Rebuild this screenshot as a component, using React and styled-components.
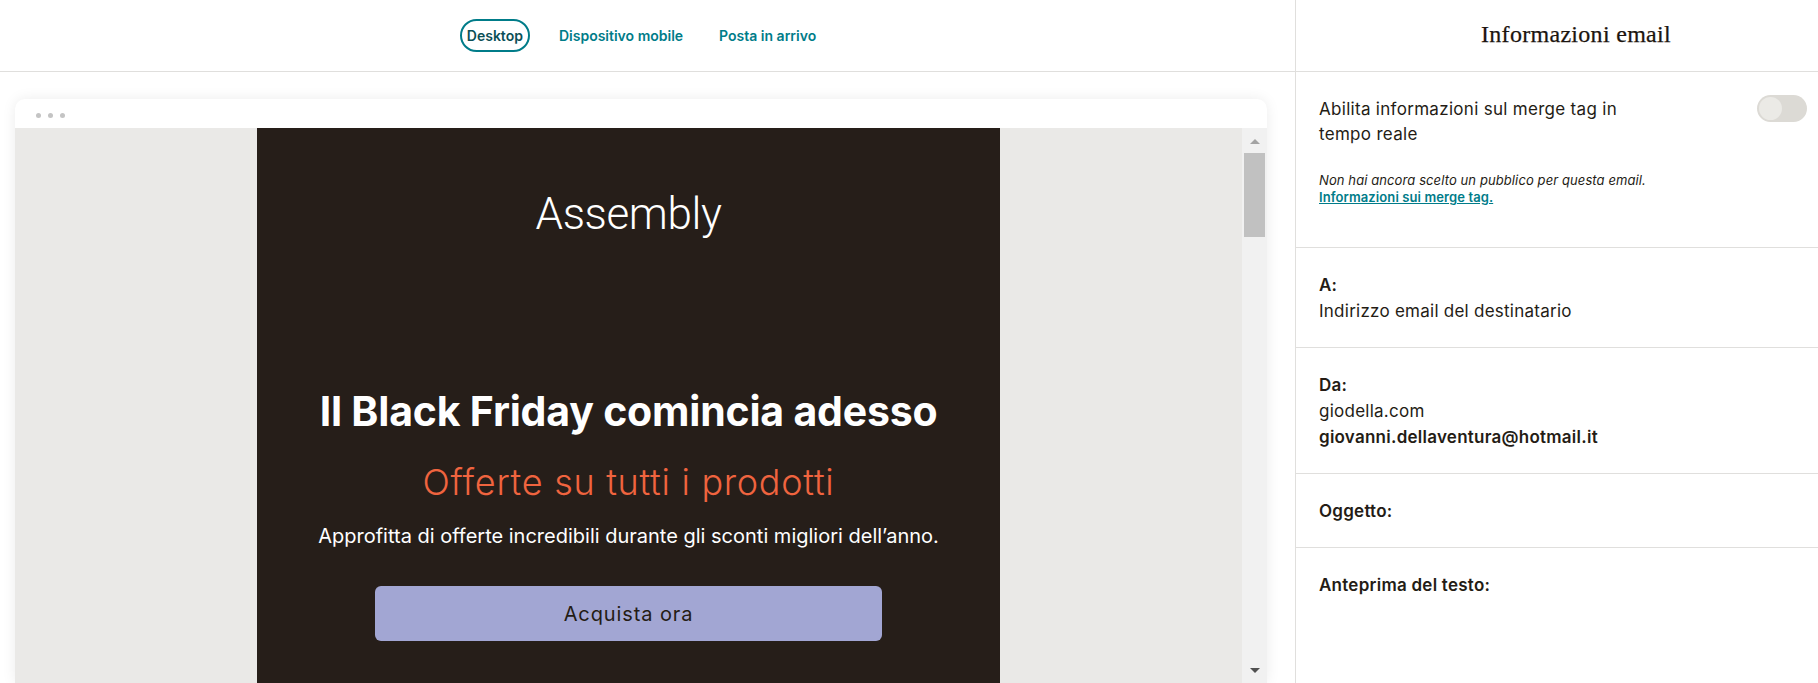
import React from 'react'
import styled, { createGlobalStyle } from 'styled-components'

const GlobalStyle = createGlobalStyle`
   html, body {
      margin: 0;
      padding: 0;
      background: #ffffff;
   }
   body {
      font-family: Inter, "Liberation Sans", sans-serif;
      color: #241c15;
   }
   * {
      box-sizing: border-box;
   }
`

const Page = styled.div`
   display: flex;
   height: 100vh;
   overflow: hidden;
`

const Main = styled.div`
   flex: 1;
   display: flex;
   flex-direction: column;
   min-width: 0;
`

const TopBar = styled.div`
   height: 72px;
   flex: 0 0 72px;
   border-bottom: 1px solid #e0dfdd;
   display: flex;
   align-items: center;
   justify-content: center;
   gap: 22px;
   padding-right: 12px;
   padding-bottom: 1px;
`

const Tab = styled.button`
   height: 33px;
   padding: 0 5px;
   border: 2px solid ${props => props.$active ? '#007c89' : 'transparent'};
   border-radius: 17px;
   background: none;
   font-family: Inter, "Liberation Sans", sans-serif;
   font-size: 14px;
   font-weight: 600;
   color: ${props => props.$active ? '#0b4f56' : '#007c89'};
   cursor: pointer;
`

const Canvas = styled.div`
   flex: 1;
   display: flex;
   padding: 27px 28px 0 15px;
   min-height: 0;
`

const Card = styled.div`
   flex: 1;
   display: flex;
   flex-direction: column;
   background: #ffffff;
   border-radius: 10px 10px 0 0;
   box-shadow: 0 0 14px rgba(0, 0, 0, 0.08);
   overflow: hidden;
`

const CardHeader = styled.div`
   height: 29px;
   flex: 0 0 29px;
   display: flex;
   align-items: flex-end;
   gap: 7px;
   padding: 0 0 10px 21px;
`

const Dot = styled.span`
   width: 5px;
   height: 5px;
   border-radius: 50%;
   background: #c4c4c4;
`

const CardBody = styled.div`
   flex: 1;
   display: flex;
   background: #eae9e7;
   min-height: 0;
`

const Viewport = styled.div`
   flex: 1;
   display: flex;
   justify-content: center;
   overflow: hidden;
`

const Email = styled.div`
   width: 743px;
   background: #261e19;
   display: flex;
   flex-direction: column;
   align-items: center;
   text-align: center;
   padding-top: 64px;
`

const Logo = styled.div`
   font-family: Roboto, "Liberation Sans", sans-serif;
   font-weight: 300;
   font-size: 44px;
   line-height: 44px;
   color: #ffffff;
   letter-spacing: -0.4px;
`

const Headline = styled.h1`
   margin: 151px 0 0;
   font-family: Inter, "Liberation Sans", sans-serif;
   font-weight: 700;
   font-size: 41px;
   line-height: 48px;
   color: #ffffff;
   letter-spacing: -0.2px;
`

const Subline = styled.h2`
   margin: 26px 0 0;
   font-family: Inter, "Liberation Sans", sans-serif;
   font-weight: 300;
   font-size: 36px;
   line-height: 42px;
   letter-spacing: 0.7px;
   color: #f0643f;
`

const Body = styled.p`
   margin: 20px 0 0;
   font-size: 20px;
   line-height: 26px;
   color: #ffffff;
`

const Cta = styled.a`
   margin-top: 37px;
   width: 507px;
   height: 55px;
   display: flex;
   align-items: center;
   justify-content: center;
   background: #a2a6d3;
   border-radius: 6px;
   font-size: 20px;
   letter-spacing: 0.9px;
   color: #241c15;
   text-decoration: none;
`

const Scrollbar = styled.div`
   width: 25px;
   flex: 0 0 25px;
   background: #f1f1f1;
   display: flex;
   flex-direction: column;
   align-items: center;
`

const ArrowButton = styled.div`
   height: 25px;
   flex: 0 0 25px;
   display: flex;
   align-items: center;
   justify-content: center;
   margin-top: ${props => props.$down ? 'auto' : '0'};
`

const Thumb = styled.div`
   width: 21px;
   height: 84px;
   background: #c1c1c1;
`

const Side = styled.aside`
   width: 523px;
   flex: 0 0 523px;
   border-left: 1px solid #e0dfdd;
   display: flex;
   flex-direction: column;
`

const SideHeader = styled.div`
   height: 72px;
   flex: 0 0 72px;
   border-bottom: 1px solid #e0dfdd;
   display: flex;
   align-items: center;
   justify-content: center;
   padding: 0 0 3px 38px;
`

const SideTitle = styled.h3`
   margin: 0;
   font-family: "Liberation Serif", "DejaVu Serif", serif;
   font-weight: 400;
   font-size: 24px;
   letter-spacing: 0.3px;
   color: #1c150f;
   -webkit-text-stroke: 0.25px #1c150f;
`

const Section = styled.div`
   border-bottom: ${props => props.$last ? 'none' : '1px solid #e0dfdd'};
   padding: ${props => props.$pad || '24px 24px 23px 23px'};
`

const ToggleRow = styled.div`
   display: flex;
   justify-content: space-between;
   align-items: flex-start;
`

const ToggleLabel = styled.div`
   width: 330px;
   font-size: 17px;
   line-height: 25px;
   letter-spacing: 0.3px;
`

const Toggle = styled.span`
   position: relative;
   width: 50px;
   height: 27px;
   margin-top: -2px;
   border-radius: 14px;
   background: #dcdad5;

   &::after {
      content: '';
      position: absolute;
      left: 2px;
      top: 2px;
      width: 23px;
      height: 23px;
      border-radius: 50%;
      background: #ebeae6;
   }
`

const Note = styled.p`
   margin: 25px 0 0;
   font-size: 13px;
   line-height: 17px;
   font-style: italic;
   letter-spacing: 0.1px;
`

const NoteLink = styled.a`
   display: block;
   font-style: normal;
   font-weight: 600;
   color: #007c89;
   text-decoration: underline;
`

const FieldLabel = styled.div`
   font-size: 17px;
   line-height: 26px;
   font-weight: 600;
   letter-spacing: 0.25px;
`

const FieldValue = styled.div`
   font-size: 17px;
   line-height: 26px;
   letter-spacing: 0.25px;
   font-weight: ${props => props.$strong ? 600 : 400};
`

const Arrow = ({ down, color }) => (
   <svg width="10" height="6" viewBox="0 0 10 6">
      <path d={down ? 'M0 0 H10 L5 5 Z' : 'M0 6 H10 L5 1 Z'} fill={color} />
   </svg>
)

export default function App() {
   return (
      <>
         <GlobalStyle />
         <Page>
            <Main>
               <TopBar>
                  <Tab $active>Desktop</Tab>
                  <Tab>Dispositivo mobile</Tab>
                  <Tab>Posta in arrivo</Tab>
               </TopBar>
               <Canvas>
                  <Card>
                     <CardHeader>
                        <Dot />
                        <Dot />
                        <Dot />
                     </CardHeader>
                     <CardBody>
                        <Viewport>
                           <Email>
                              <Logo>Assembly</Logo>
                              <Headline>Il Black Friday comincia adesso</Headline>
                              <Subline>Offerte su tutti i prodotti</Subline>
                              <Body>Approfitta di offerte incredibili durante gli sconti migliori dell’anno.</Body>
                              <Cta href="#">Acquista ora</Cta>
                           </Email>
                        </Viewport>
                        <Scrollbar>
                           <ArrowButton>
                              <Arrow color="#a3a3a3" />
                           </ArrowButton>
                           <Thumb />
                           <ArrowButton $down>
                              <Arrow down color="#505050" />
                           </ArrowButton>
                        </Scrollbar>
                     </CardBody>
                  </Card>
               </Canvas>
            </Main>
            <Side>
               <SideHeader>
                  <SideTitle>Informazioni email</SideTitle>
               </SideHeader>
               <Section $pad="25px 11px 41px 23px">
                  <ToggleRow>
                     <ToggleLabel>Abilita informazioni sul merge tag in tempo reale</ToggleLabel>
                     <Toggle />
                  </ToggleRow>
                  <Note>
                     Non hai ancora scelto un pubblico per questa email.
                     <NoteLink href="#">Informazioni sui merge tag.</NoteLink>
                  </Note>
               </Section>
               <Section>
                  <FieldLabel>A:</FieldLabel>
                  <FieldValue>Indirizzo email del destinatario</FieldValue>
               </Section>
               <Section>
                  <FieldLabel>Da:</FieldLabel>
                  <FieldValue>giodella.com</FieldValue>
                  <FieldValue $strong>giovanni.dellaventura@hotmail.it</FieldValue>
               </Section>
               <Section>
                  <FieldLabel>Oggetto:</FieldLabel>
               </Section>
               <Section $last>
                  <FieldLabel>Anteprima del testo:</FieldLabel>
               </Section>
            </Side>
         </Page>
      </>
   )
}
